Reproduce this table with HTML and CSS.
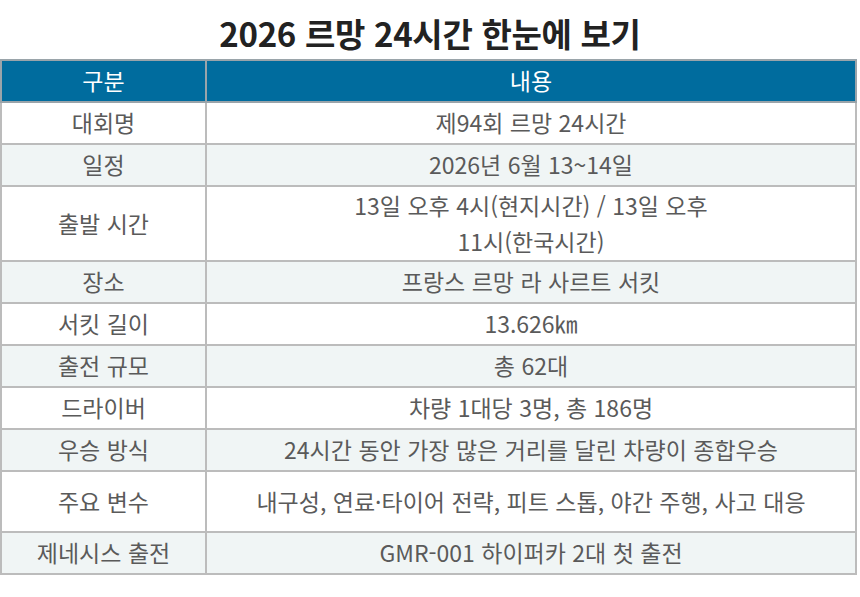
FILE: index.html
```html
<!DOCTYPE html>
<html lang="ko">
<head>
<meta charset="utf-8">
<link rel="stylesheet" href="styles.css">
</head>
<body>
<h1 class="title">2026 르망 24시간 한눈에 보기</h1>
<table class="info">
  <colgroup><col class="c1"><col class="c2"></colgroup>
  <thead>
    <tr><th>구분</th><th>내용</th></tr>
  </thead>
  <tbody>
    <tr><td>대회명</td><td>제94회 르망 24시간</td></tr>
    <tr class="alt"><td>일정</td><td>2026년 6월 13~14일</td></tr>
    <tr><td>출발 시간</td><td>13일 오후 4시(현지시간) / 13일 오후<br>11시(한국시간)</td></tr>
    <tr class="alt"><td>장소</td><td>프랑스 르망 라 사르트 서킷</td></tr>
    <tr><td>서킷 길이</td><td>13.626㎞</td></tr>
    <tr class="alt"><td>출전 규모</td><td>총 62대</td></tr>
    <tr><td>드라이버</td><td>차량 1대당 3명, 총 186명</td></tr>
    <tr class="alt"><td>우승 방식</td><td>24시간 동안 가장 많은 거리를 달린 차량이 종합우승</td></tr>
    <tr class="tall"><td>주요 변수</td><td>내구성, 연료·타이어 전략, 피트 스톱, 야간 주행, 사고 대응</td></tr>
    <tr class="alt"><td>제네시스 출전</td><td>GMR-001 하이퍼카 2대 첫 출전</td></tr>
  </tbody>
</table>
</body>
</html>
```
FILE: styles.css
```css
html, body {
  margin: 0;
  padding: 0;
  background: #ffffff;
}
body {
  font-family: "Noto Sans CJK KR", "Noto Sans", sans-serif;
  color: #5a5a5a;
}
.title {
  margin: 0;
  padding-top: 10px;
  height: 49px;
  font-size: 33px;
  font-weight: 700;
  line-height: 46px;
  text-align: center;
  color: #222222;
  letter-spacing: -0.3px;
}
.info {
  border-collapse: collapse;
  width: 857px;
  margin-left: 0;
  table-layout: fixed;
  font-size: 23px;
}
.c1 { width: 205px; }
.info th, .info td {
  border: 2px solid #bcbcbc;
  text-align: center;
  vertical-align: middle;
  padding: 1px 4px;
  height: 38px;
  line-height: 35.5px;
  font-weight: 400;
}
.info th {
  background: #006c9e;
  color: #ffffff;
  border-color: #9aa4aa;
}
.info tr.alt td {
  background: #f0f5f5;
}
.info tr.tall td {
  height: 57px;
}
```
